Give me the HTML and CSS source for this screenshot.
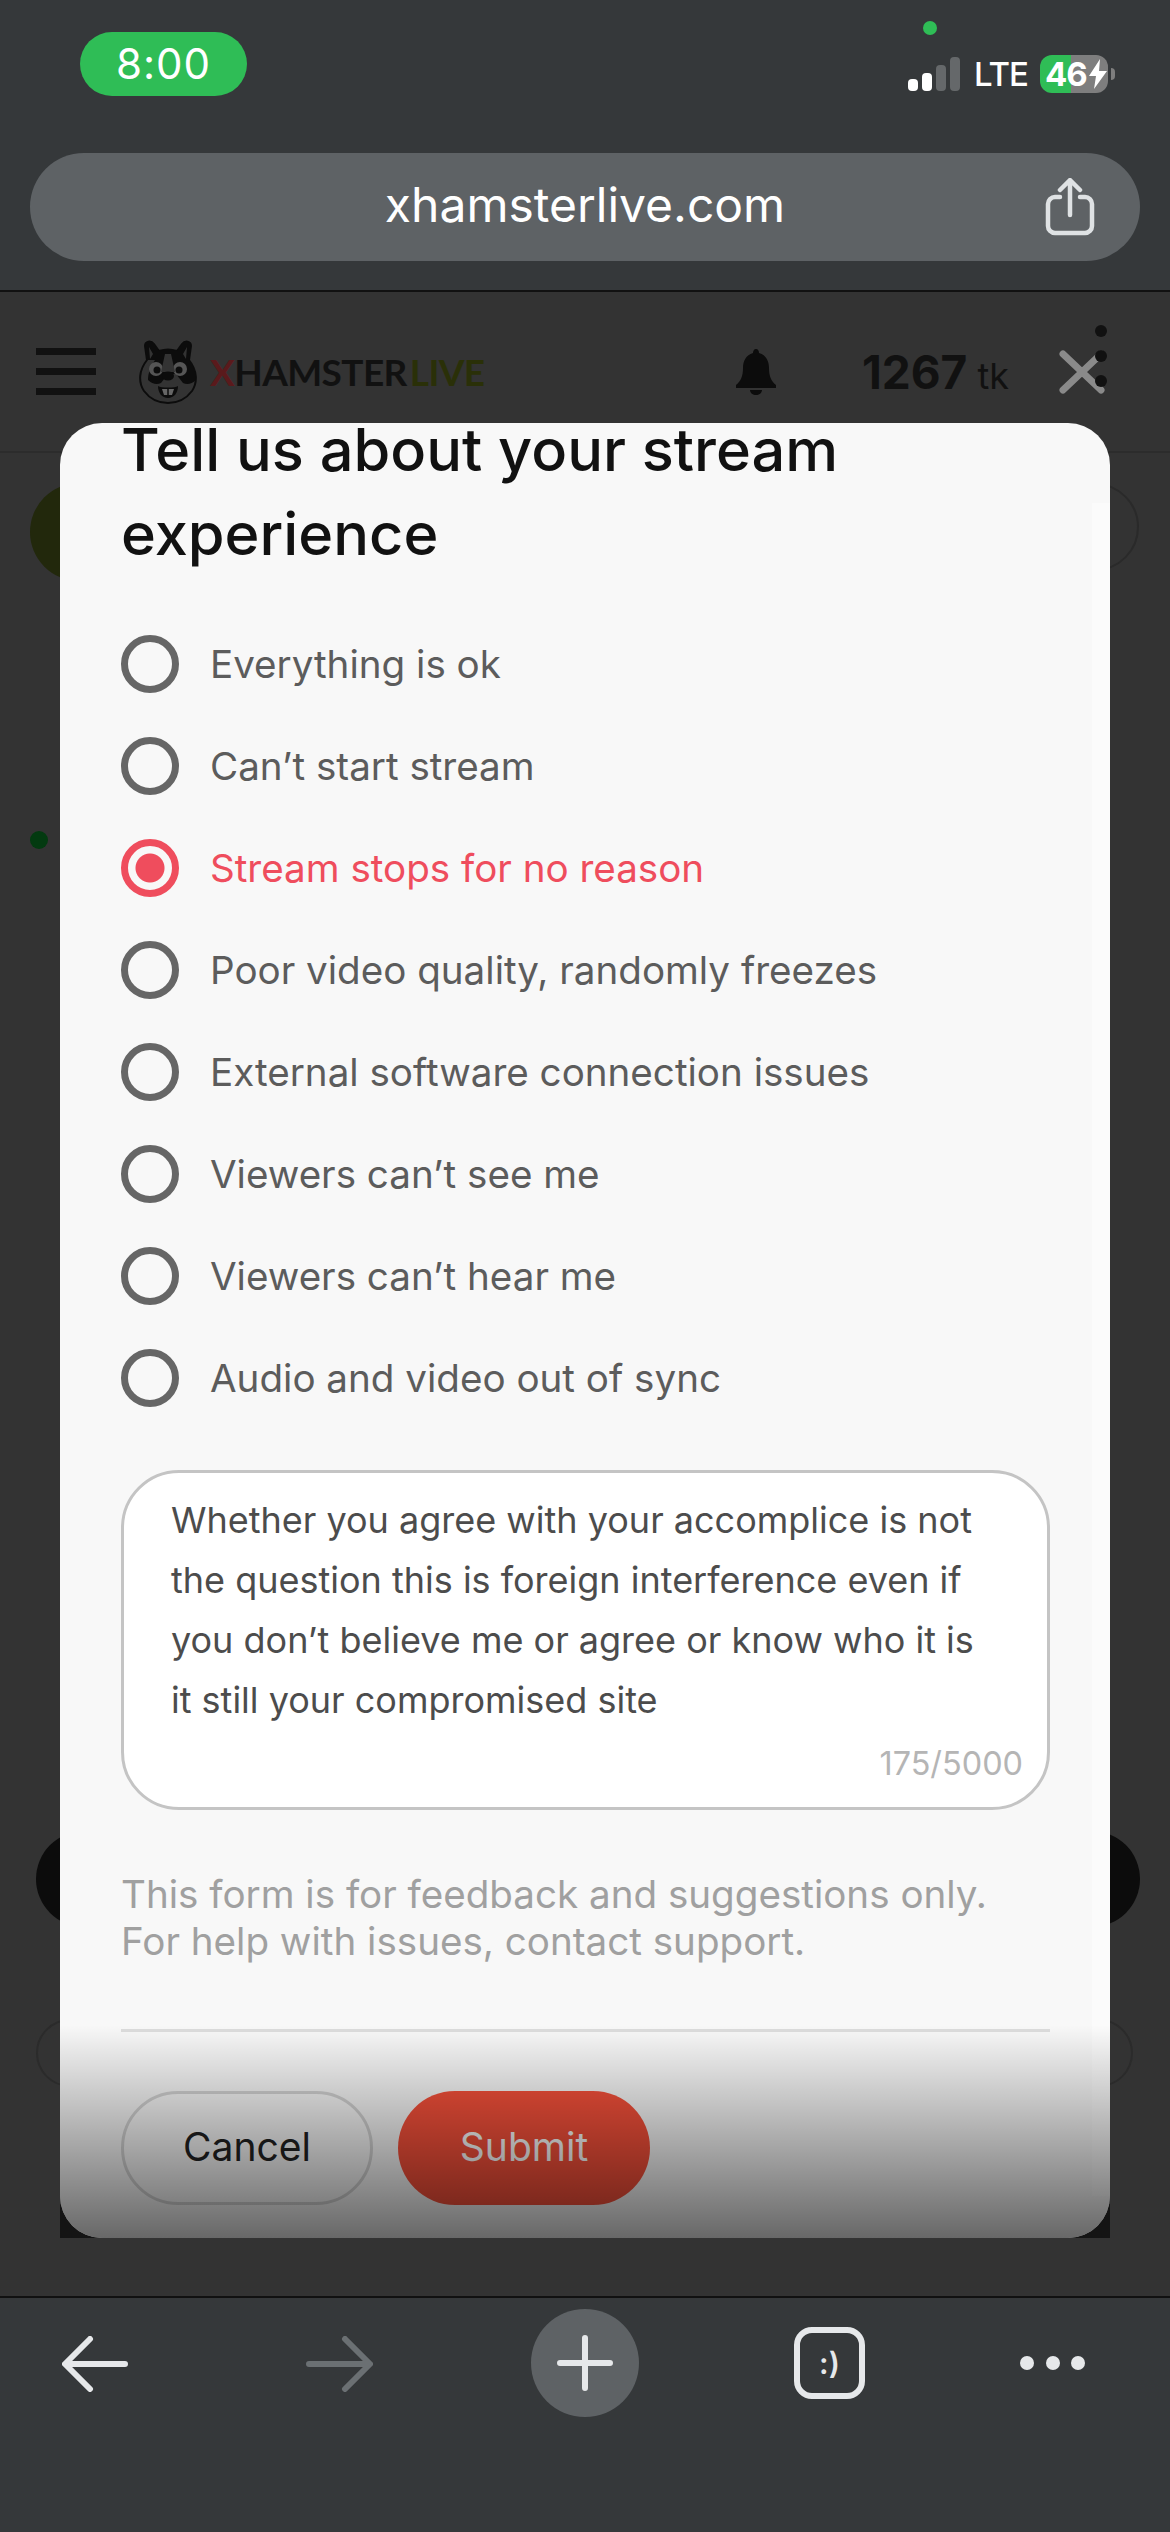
FILE: index.html
```html
<!DOCTYPE html>
<html lang="en">
<head>
  <meta charset="UTF-8">
  <title>xhamsterlive.com</title>
  <link rel="stylesheet" href="styles.css">
</head>
<body>

  <header class="browser-top">
    <div class="status-bar">
      <div class="time-pill">8:00</div>
      <div class="status-right">
        <span class="mic-dot"></span>
        <div class="status-icons">
          <div class="signal">
            <span class="bar bar-1"></span>
            <span class="bar bar-2"></span>
            <span class="bar bar-3 off"></span>
            <span class="bar bar-4 off"></span>
          </div>
          <span class="lte">LTE</span>
          <div class="battery">
            <span class="battery-num">46</span>
            <svg class="bolt" width="20" height="30" viewBox="0 0 20 30"><path d="M12 0 1 17h7L6 30 19 12h-8z" fill="#fff"/></svg>
          </div>
          <span class="battery-nub"></span>
        </div>
      </div>
    </div>
    <div class="url-bar">
      <span></span>
      <span class="url-text">xhamsterlive.com</span>
      <svg class="share" width="50" height="58" viewBox="0 0 50 58" fill="none" stroke="#dfe2e4" stroke-width="4.5" stroke-linecap="round" stroke-linejoin="round">
        <path d="M25 3v34M15 12 25 2l10 10"/>
        <path d="M15 19h-5a7 7 0 0 0-7 7v22a7 7 0 0 0 7 7h30a7 7 0 0 0 7-7V26a7 7 0 0 0-7-7h-5"/>
      </svg>
    </div>
  </header>

  <main class="page">
    <div class="site-header">
      <div class="burger"><span></span><span></span><span></span></div>
      <svg class="hamster" width="68" height="64" viewBox="4 0 60 64">
        <path d="M13 20 11 6c0-5 6-6 9-2l5 7c6-2 12-2 18 0l5-7c3-4 9-3 9 2l-2 14c8 10 9 22 3 31-6 8-15 12-24 12S16 59 10 51C4 42 5 30 13 20z" fill="#333" stroke="#0c0c0c" stroke-width="2"/>
        <path d="M13 20 11 6c0-5 6-6 9-2l5 7c6-2 12-2 18 0l5-7c3-4 9-3 9 2l-2 14c5 7 7 14 7 20-4 4-9 5-13 3l-7-9h-8l-7 9c-4 2-9 1-13-3 0-6 2-13 7-20z" fill="#0c0c0c"/>
        <path d="M15 7l4 7-3 5zM53 7l-4 7 3 5z" fill="#333"/>
        <circle cx="22" cy="29" r="7" fill="#555"/>
        <circle cx="46" cy="29" r="7" fill="#555"/>
        <circle cx="23" cy="30" r="3.5" fill="#0c0c0c"/>
        <circle cx="45" cy="30" r="3.5" fill="#0c0c0c"/>
        <path d="M31 14h6l4 18h-14z" fill="#333"/>
        <ellipse cx="34" cy="36" rx="6" ry="4.5" fill="#0c0c0c"/>
        <path d="M24 46c3 2 17 2 20 0 0 7-4 12-10 12s-10-5-10-12z" fill="#0c0c0c"/>
        <path d="M28 49h12l-2 6h-8z" fill="#666"/>
        <path d="M34 49v6" stroke="#0c0c0c" stroke-width="1.5"/>
      </svg>
      <div class="brand"><span class="brand-x">X</span>HAMSTER<span class="brand-live">LIVE</span></div>
      <svg class="bell" width="42" height="46" viewBox="0 0 42 46"><path d="M21 0c2 0 3 2 3 4 7 2 10 8 10 15 0 8 2 13 7 17v3H1v-3c5-4 7-9 7-17 0-7 3-13 10-15 0-2 1-4 3-4zM15 41h12c0 3-3 5-6 5s-6-2-6-5z" fill="#0c0c0c"/></svg>
      <div class="tokens"><b>1267</b> tk</div>
      <div class="header-end">
        <svg width="46" height="44" viewBox="0 0 46 44" fill="none" stroke="#8a8a8a" stroke-width="7" stroke-linecap="round"><path d="M4 4l38 36M42 4 4 40"/></svg>
        <div class="kebab"><span></span><span></span><span></span></div>
      </div>
    </div>
    <div class="stream-row">
      <span class="avatar"></span>
      <span class="share-ring"></span>
    </div>
    <span class="online-dot"></span>
    <div class="go-live-pill"></div>
    <div class="outline-pill"></div>
  </main>

  <section class="modal-backing">
    <div class="modal">
      <span class="modal-scrollbar"></span>
      <div class="modal-body">
        <h2>Tell us about your stream experience</h2>
        <div class="options">
          <div class="option"><span class="radio"></span>Everything is ok</div>
          <div class="option"><span class="radio"></span>Can’t start stream</div>
          <div class="option selected"><span class="radio"></span>Stream stops for no reason</div>
          <div class="option"><span class="radio"></span>Poor video quality, randomly freezes</div>
          <div class="option"><span class="radio"></span>External software connection issues</div>
          <div class="option"><span class="radio"></span>Viewers can’t see me</div>
          <div class="option"><span class="radio"></span>Viewers can’t hear me</div>
          <div class="option"><span class="radio"></span>Audio and video out of sync</div>
        </div>
        <div class="comment-box">
          <p>Whether you agree with your accomplice is not the question this is foreign interference even if you don’t believe me or agree or know who it is it still your compromised site</p>
          <div class="counter">175/5000</div>
        </div>
        <p class="note">This form is for feedback and suggestions only.<br>For help with issues, contact support.</p>
      </div>
      <div class="modal-footer">
        <div class="divider"></div>
        <div class="buttons">
          <button class="btn btn-cancel">Cancel</button>
          <button class="btn btn-submit">Submit</button>
        </div>
      </div>
    </div>
  </section>

  <nav class="toolbar">
    <svg class="tool-back" width="66" height="56" viewBox="0 0 66 56" fill="none" stroke="#e6e8ea" stroke-width="6" stroke-linecap="round" stroke-linejoin="round"><path d="M63 28H4M28 3 3 28l25 25"/></svg>
    <svg class="tool-forward" width="67" height="56" viewBox="0 0 67 56" fill="none" stroke="#6b7073" stroke-width="6" stroke-linecap="round" stroke-linejoin="round"><path d="M3 28h60M39 3l25 25-25 25"/></svg>
    <div class="tool-plus">
      <svg width="56" height="56" viewBox="0 0 56 56" stroke="#e6e8ea" stroke-width="6" stroke-linecap="round"><path d="M28 3v50M3 28h50"/></svg>
    </div>
    <div class="tool-tabs">:)</div>
    <div class="tool-more"><span></span><span></span><span></span></div>
  </nav>

</body>
</html>
```

FILE: styles.css
```css
* {
  box-sizing: border-box;
}

body {
  margin: 0;
  width: 1170px;
  height: 2532px;
  overflow: hidden;
  position: relative;
  display: flex;
  flex-direction: column;
  background: #35383a;
  font-family: 'Inter', 'Liberation Sans', sans-serif;
}

/* browser chrome, top */
.browser-top {
  height: 292px;
  flex: none;
  background: #35383a;
  border-bottom: 2px solid #111;
}

.status-bar {
  height: 153px;
  padding: 0 55px 0 80px;
  display: flex;
  justify-content: space-between;
  align-items: flex-start;
}

.time-pill {
  margin-top: 32px;
  width: 167px;
  height: 64px;
  border-radius: 32px;
  background: #2fbd56;
  color: #fff;
  font-size: 42px;
  line-height: 64px;
  text-align: center;
  letter-spacing: 1px;
}

.status-right {
  display: flex;
  flex-direction: column;
  align-items: flex-start;
}

.mic-dot {
  width: 14px;
  height: 14px;
  margin: 21px 0 20px 15px;
  border-radius: 50%;
  background: #2fbd56;
}

.status-icons {
  display: flex;
  align-items: center;
  height: 38px;
}

.signal {
  display: flex;
  align-items: flex-end;
  gap: 4px;
  height: 36px;
  width: 66px;
  margin-top: -2px;
}

.bar {
  width: 10px;
  border-radius: 4px;
  background: #fff;
}

.bar.off {
  background: #65686a;
}

.bar-1 { height: 12px; }
.bar-2 { height: 18px; }
.bar-3 { height: 26px; }
.bar-4 { height: 34px; }

.lte {
  color: #fff;
  font-size: 33px;
  font-weight: 500;
  margin-right: 12px;
  letter-spacing: -1px;
}

.battery {
  width: 68px;
  height: 38px;
  border-radius: 12px;
  background: linear-gradient(to right, #2fbd56 46%, #7e7e7e 46%);
  display: flex;
  align-items: center;
  padding-left: 5px;
  color: #fff;
}

.battery-num {
  font-size: 33px;
  font-weight: 700;
  letter-spacing: -1px;
}

.bolt {
  margin-left: 1px;
}

.battery-nub {
  width: 4px;
  height: 12px;
  margin-left: 3px;
  border-radius: 0 4px 4px 0;
  background: #7e7e7e;
}

.url-bar {
  margin: 0 30px;
  height: 108px;
  border-radius: 54px;
  background: #5e6265;
  padding: 0 45px;
  display: grid;
  grid-template-columns: 1fr auto 1fr;
  align-items: center;
}

.url-text {
  color: #fff;
  font-size: 48px;
  margin-top: -6px;
}

.share {
  justify-self: end;
}

/* dimmed site behind the dialog */
.page {
  height: 2006px;
  flex: none;
  background: #333;
  border-bottom: 2px solid #111;
  display: flex;
  flex-direction: column;
}

.site-header {
  height: 161px;
  flex: none;
  border-bottom: 2px solid #2c2c2c;
  padding: 0 65px 0 36px;
  display: flex;
  align-items: center;
}

.burger {
  width: 60px;
  display: flex;
  flex-direction: column;
  gap: 13px;
  margin-right: 38px;
}

.burger span {
  height: 7px;
  background: #111;
}

.brand {
  margin-left: 8px;
  font-family: 'Lato', sans-serif;
  font-size: 37px;
  font-weight: 700;
  letter-spacing: -0.6px;
  color: #111;
}

.brand-x {
  color: #5a1a1c;
}

.brand-live {
  color: #2a3008;
  margin-left: 3px;
}

.bell {
  margin-left: auto;
  margin-right: 85px;
}

.tokens {
  font-size: 36px;
  color: #111;
  margin-right: 50px;
}

.tokens b {
  font-size: 46px;
  font-weight: 700;
}

.header-end {
  position: relative;
  display: flex;
}

.kebab {
  position: absolute;
  left: 36px;
  top: -25px;
  display: flex;
  flex-direction: column;
  gap: 13px;
}

.kebab span {
  width: 12px;
  height: 12px;
  border-radius: 50%;
  background: #111;
}

.stream-row {
  padding: 30px 31px 0 30px;
  display: flex;
  justify-content: space-between;
}

.avatar {
  width: 98px;
  height: 98px;
  border-radius: 50%;
  background: #22280c;
}

.share-ring {
  width: 88px;
  height: 88px;
  border-radius: 50%;
  border: 2px solid #2a2a2a;
}

.online-dot {
  width: 18px;
  height: 18px;
  margin: 250px 0 0 30px;
  border-radius: 50%;
  background: #033a10;
}

.go-live-pill {
  margin: 982px 30px 0 36px;
  height: 96px;
  border-radius: 48px;
  background: #0c0c0c;
}

.outline-pill {
  margin: 92px 37px 0 36px;
  height: 68px;
  border-radius: 34px;
  border: 2px solid #2b2b2b;
}

/* dialog */
.modal-backing {
  position: absolute;
  left: 60px;
  top: 423px;
  width: 1050px;
  height: 1815px;
  background: linear-gradient(to bottom, transparent calc(100% - 60px), #141414 calc(100% - 60px));
}

.modal {
  position: relative;
  height: 100%;
  border-radius: 42px;
  background: #f8f8f8;
  display: flex;
  flex-direction: column;
}

.modal-scrollbar {
  position: absolute;
  top: 80px;
  right: 0;
  bottom: 42px;
  width: 18px;
  background: #fbfbfb;
}

.modal-body {
  position: relative;
  height: 1602px;
  flex: none;
  padding: 0 60px 0 61px;
}

h2 {
  margin: -16px 0 38px;
  font-size: 59.5px;
  line-height: 84px;
  font-weight: 500;
  color: #111;
  max-width: 800px;
}

.option {
  height: 102px;
  display: flex;
  align-items: center;
  gap: 31px;
  font-size: 38.6px;
  color: #5c5c5c;
}

.radio {
  width: 58px;
  height: 58px;
  border-radius: 50%;
  border: 7px solid #666;
}

.option.selected {
  color: #ef4d5d;
}

.option.selected .radio {
  border-color: #ef4d5d;
  background: radial-gradient(circle, #ef4d5d 0 14px, transparent 15px);
}

.comment-box {
  margin-top: 41px;
  height: 340px;
  border: 3px solid #c4c4c4;
  border-radius: 58px;
  background: #fff;
  padding: 17px 24px 0 47px;
  font-size: 36px;
  line-height: 60px;
  color: #4c4c4c;
}

.comment-box p {
  margin: 0;
  max-width: 815px;
}

.counter {
  margin-top: 14px;
  text-align: right;
  font-size: 32.4px;
  line-height: 40px;
  color: #b5b5b5;
}

.note {
  margin: 61px 0 0;
  font-size: 38.6px;
  line-height: 47px;
  color: #a0a0a0;
}

.modal-footer {
  position: relative;
  flex: 1;
  padding: 4px 60px 0 61px;
  border-radius: 0 0 42px 42px;
  overflow: hidden;
}

.modal-footer::after {
  content: "";
  position: absolute;
  inset: 0;
  background: linear-gradient(to bottom, rgba(0, 0, 0, 0), rgba(0, 0, 0, 0.58));
}

.divider {
  height: 3px;
  background: #ddd;
}

.buttons {
  margin-top: 59px;
  display: flex;
  gap: 25px;
}

.btn {
  width: 252px;
  height: 114px;
  padding-bottom: 5px;
  border-radius: 57px;
  font-family: inherit;
  font-size: 39px;
}

.btn-cancel {
  background: transparent;
  border: 3px solid #d4d4d4;
  color: #222;
}

.btn-submit {
  background: #f6503a;
  border: none;
  color: #fff;
}

/* browser chrome, bottom */
.toolbar {
  flex: 1;
  padding: 37px 0 0 62px;
  display: flex;
  align-items: flex-start;
  gap: 155px;
  background: #35383a;
}

.tool-back {
  margin-right: 23px;
}

.tool-forward {
  margin-right: 3px;
}

.tool-back, .tool-forward {
  margin-top: 1px;
}

.tool-plus {
  width: 108px;
  height: 108px;
  margin-top: -26px;
  border-radius: 50%;
  background: #5e6265;
  display: flex;
  align-items: center;
  justify-content: center;
}

.tool-tabs {
  width: 71px;
  height: 72px;
  margin-top: -8px;
  border: 6px solid #e6e8ea;
  border-radius: 18px;
  color: #e6e8ea;
  font-size: 30px;
  font-weight: 600;
  line-height: 60px;
  text-align: center;
}

.tool-more {
  width: 65px;
  height: 26px;
  display: flex;
  align-items: center;
  justify-content: space-between;
  margin-top: 15px;
}

.tool-more span {
  width: 14px;
  height: 14px;
  border-radius: 50%;
  background: #e6e8ea;
}
```
